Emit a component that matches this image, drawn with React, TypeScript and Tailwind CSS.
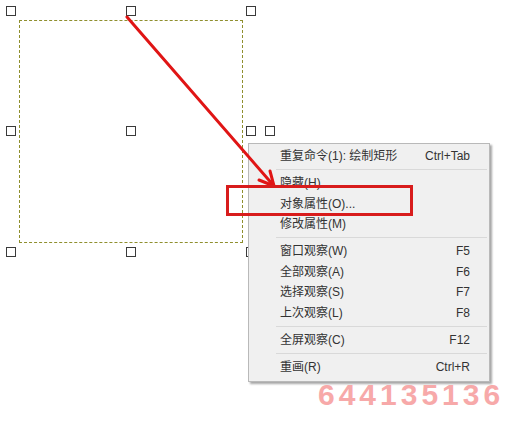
import React from "react";

type MenuEntry = { label: string; shortcut?: string } | "sep";

const MENU: MenuEntry[] = [
  { label: "重复命令(1): 绘制矩形", shortcut: "Ctrl+Tab" },
  "sep",
  { label: "隐藏(H)" },
  { label: "对象属性(O)..." },
  { label: "修改属性(M)" },
  "sep",
  { label: "窗口观察(W)", shortcut: "F5" },
  { label: "全部观察(A)", shortcut: "F6" },
  { label: "选择观察(S)", shortcut: "F7" },
  { label: "上次观察(L)", shortcut: "F8" },
  "sep",
  { label: "全屏观察(C)", shortcut: "F12" },
  "sep",
  { label: "重画(R)", shortcut: "Ctrl+R" },
];

// centers of the grip squares on the canvas
const HANDLES: [number, number][] = [
  [11, 11], [131, 11], [251, 11],
  [11, 131], [131, 131], [251, 131], [270, 131],
  [11, 252], [131, 252], [251, 252],
];

function ContextMenu() {
  return (
    <div className="absolute left-[248px] top-[143px] w-[242px] bg-[#f0f0f0] border border-[#b9b9b9] shadow-[2px_2px_2px_rgba(0,0,0,0.35)] pt-[2px] pb-[4px] text-[12px] text-[#333333]">
      {MENU.map((m, i) =>
        m === "sep" ? (
          <div key={i} className="h-[6.5px] flex items-center pl-[27px] pr-[2px]">
            <div className="h-px w-full bg-[#d9d9d9]" />
          </div>
        ) : (
          <div key={i} className="h-[20.5px] flex items-center justify-between pl-[31px] pr-[19px]">
            <span>{m.label}</span>
            {m.shortcut && <span>{m.shortcut}</span>}
          </div>
        )
      )}
    </div>
  );
}

export default function App() {
  return (
    <div
      className="relative w-[521px] h-[427px] bg-white overflow-hidden"
      style={{ fontFamily: '"Liberation Sans", "Noto Sans CJK SC", sans-serif' }}
    >
      {/* selected rectangle */}
      <div className="absolute left-[19px] top-[20px] w-[224px] h-[223px] border border-dashed border-[#8f8f2e]" />

      {HANDLES.map(([x, y], i) => (
        <div
          key={i}
          className="absolute w-[10px] h-[10px] border border-[#3a3a3a] bg-white"
          style={{ left: x - 5, top: y - 5 }}
        />
      ))}

      <ContextMenu />

      {/* red annotation */}
      <svg className="absolute inset-0" width="521" height="427" viewBox="0 0 521 427">
        <g stroke="#e01515" strokeWidth="3" fill="none" strokeLinecap="round">
          <line x1="127" y1="17" x2="274" y2="186" />
          <line x1="274" y1="186" x2="259" y2="180" />
          <line x1="274" y1="186" x2="270" y2="171" />
        </g>
        <rect x="227.5" y="186.5" width="184" height="28" stroke="#d81c1c" strokeWidth="3" fill="none" />
      </svg>

      <div className="absolute left-[318px] top-[375px] text-[30px] leading-[40px] font-bold tracking-[4px] text-[#f7a9a9]">
        644135136
      </div>
    </div>
  );
}
